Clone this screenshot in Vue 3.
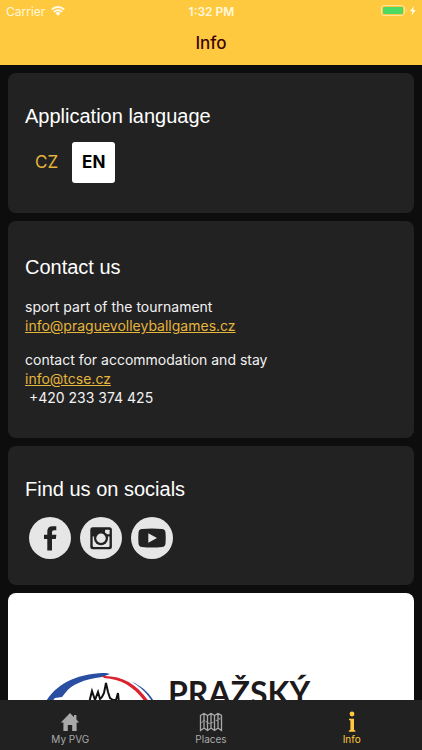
<script setup>
import { ref } from 'vue'

const language = ref('EN')
const languages = ['CZ', 'EN']
const activeTab = ref('Info')
const tabs = ['My PVG', 'Places', 'Info']
</script>

<template>
  <div class="app">
    <header class="header">
      <div class="status">
        <div class="carrier">
          <span>Carrier</span>
          <svg class="wifi" viewBox="0 0 14 10" aria-hidden="true">
            <path d="M0.8 3.6 A8.9 8.9 0 0 1 13.2 3.6" />
            <path d="M2.9 5.9 A5.9 5.9 0 0 1 11.1 5.9" />
            <path class="solid" d="M4.5 7.3 A3.6 3.6 0 0 1 9.5 7.3 L7 9.9 Z" />
          </svg>
        </div>
        <div class="clock">1:32 PM</div>
        <div class="power">
          <svg class="battery" viewBox="0 0 36 12" aria-hidden="true">
            <rect class="shell" x="0.5" y="0.5" width="23" height="10" rx="2.5" />
            <rect class="charge" x="2" y="2" width="20" height="7" rx="1" />
            <path class="nub" d="M25 4 Q26.5 5.5 25 7.5 Z" />
            <path class="bolt" d="M33 1 L29 6.3 H31.4 L30.6 10.5 L34.7 5 H32.2 Z" />
          </svg>
        </div>
      </div>
      <h1 class="title">Info</h1>
    </header>

    <main class="content">
      <section class="card">
        <h2>Application language</h2>
        <div class="languages">
          <button
            v-for="code in languages"
            :key="code"
            type="button"
            class="language"
            :class="{ active: language === code }"
            @click="language = code"
          >{{ code }}</button>
        </div>
      </section>

      <section class="card contact">
        <h2>Contact us</h2>
        <p>
          sport part of the tournament<br />
          <a href="mailto:info@praguevolleyballgames.cz">info@praguevolleyballgames.cz</a>
        </p>
        <p>
          contact for accommodation and stay<br />
          <a href="mailto:info@tcse.cz">info@tcse.cz</a><br />
          &nbsp;+420 233 374 425
        </p>
      </section>

      <section class="card socials-card">
        <h2>Find us on socials</h2>
        <div class="socials">
          <a href="#facebook" aria-label="Facebook">
            <svg viewBox="0 0 42 42">
              <circle cx="21" cy="21" r="21" />
              <path class="ink" d="M18.3 33.5 V22 H15 V17.7 H18.3 V14.6 Q18.3 9.3 23.6 9.3 H27.3 V13.3 H25 Q23 13.3 23 15.3 V17.7 H27.4 L26.8 22 H23 V33.5 Z" />
            </svg>
          </a>
          <a href="#instagram" aria-label="Instagram">
            <svg viewBox="0 0 42 42">
              <circle cx="21" cy="21" r="21" />
              <rect class="ink" x="10.3" y="10.3" width="21.6" height="22" rx="2.5" />
              <rect x="25" y="12.7" width="4.6" height="4.6" rx="0.6" />
              <path d="M12.7 19.5 H29.5 V28.8 Q29.5 30 28.3 30 H13.9 Q12.7 30 12.7 28.8 Z" />
              <circle class="ink" cx="21" cy="21.2" r="7" />
              <circle cx="21" cy="21.2" r="4.7" />
            </svg>
          </a>
          <a href="#youtube" aria-label="YouTube">
            <svg viewBox="0 0 42 42">
              <circle cx="21" cy="21" r="21" />
              <path class="ink" d="M11 12 Q21 11 31 12 Q34.2 12.3 34.5 15.5 Q35 21 34.5 26.5 Q34.2 29.8 31 30 Q21 31 11 30 Q7.8 29.8 7.5 26.5 Q7 21 7.5 15.5 Q7.8 12.3 11 12 Z" />
              <path d="M17.3 16.3 L26 21 L17.3 25.7 Z" />
            </svg>
          </a>
        </div>
      </section>

      <section class="card partner">
        <svg class="emblem" viewBox="0 0 120 90" aria-hidden="true">
          <path class="blue" d="M0 42 C8 14 34 0 66 0 L70 1 L62 4 C44 6 31 12 26 19 L22 24 L15 25 C11 29 8 36 6 46 Z" />
          <path class="red" d="M62 3 C84 2 100 13 113 35 L109 35 C98 17 84 6 64 5 Z" />
          <path class="blue" d="M92 9 C102 13 111 21 117 34 L114 32 C109 22 101 14 92 9 Z" />
          <path class="skyline" d="M48 40 L50 26 L52 18 L55 27 L58 19 L60 26 L62 24 L64 20 L66 10 L68 19 L70 25 L73 27 L76 27 L78 20 L80 40" />
        </svg>
        <div class="partner-name">PRAŽSKÝ</div>
      </section>
    </main>

    <nav class="tabs">
      <button
        v-for="tab in tabs"
        :key="tab"
        type="button"
        class="tab"
        :class="{ active: activeTab === tab }"
        @click="activeTab = tab"
      >
        <svg v-if="tab === 'My PVG'" viewBox="0 0 24 20" aria-hidden="true">
          <path class="fill" d="M12 1 L21.2 10.4 H18.6 V19 H14.2 V13 H9.8 V19 H5.4 V10.4 H2.8 Z" />
          <path class="fill" d="M16 3 H18.4 V9 L16 6.5 Z" />
        </svg>
        <svg v-else-if="tab === 'Places'" viewBox="0 0 24 20" aria-hidden="true">
          <path class="line" d="M1.5 3.5 L5 1.5 L8.5 3.5 L12 1.5 L15.5 3.5 L19 1.5 L22.5 3.5 V18.5 L19 16 L15.5 18.5 L12 16 L8.5 18.5 L5 16 L1.5 18.5 Z M5 1.5 V16 M8.5 3.5 V18.5 M12 1.5 V16 M15.5 3.5 V18.5 M19 1.5 V16" />
          <path class="route" d="M2.5 11 L4.5 8 L7 9.5 L10 11.5 L14 10.5 L17 8 L18.5 9 M19.5 6 L21.5 8 M21.5 6 L19.5 8" />
        </svg>
        <svg v-else viewBox="0 0 24 20" aria-hidden="true">
          <circle class="fill" cx="12" cy="2" r="2.4" />
          <path class="fill" d="M9 6.8 H14 V18 L15.4 18.5 V19.7 H8.8 V18.5 L10.4 18 V8.4 L9 7.9 Z" />
        </svg>
        <span>{{ tab }}</span>
      </button>
    </nav>
  </div>
</template>

<style>
body {
  margin: 0;
  background: #0d0d0d;
}
</style>

<style scoped>
.app {
  display: flex;
  flex-direction: column;
  height: 100vh;
  background: #0d0d0d;
  color: #fff;
  font-family: Inter, "Liberation Sans", sans-serif;
}

.header {
  flex: none;
  background: #ffc93f;
  padding-bottom: 11px;
}

.status {
  display: grid;
  grid-template-columns: 1fr auto 1fr;
  align-items: center;
  height: 22px;
  padding: 0 5px 0 6px;
  font-size: 12px;
  color: #fff8dc;
}

.carrier {
  display: flex;
  align-items: center;
  gap: 6px;
}

.wifi {
  width: 14px;
  height: 10px;
  fill: none;
  stroke: #fffbea;
  stroke-width: 2;
}

.wifi .solid {
  fill: #fffbea;
  stroke: none;
}

.clock {
  font-weight: 600;
}

.power {
  display: flex;
  justify-content: flex-end;
}

.battery {
  width: 36px;
  height: 12px;
}

.shell {
  fill: none;
  stroke: #ffe59c;
}

.charge {
  fill: #4cd964;
}

.nub {
  fill: #ffe59c;
}

.bolt {
  fill: #fffbea;
}

.title {
  margin: 0;
  padding-top: 10px;
  color: #3a0508;
  font-size: 17px;
  font-weight: 500;
  line-height: 22px;
  text-align: center;
}

.content {
  flex: 1;
  min-height: 0;
  display: flex;
  flex-direction: column;
  gap: 8px;
  padding: 8px 8px 0;
  overflow-y: auto;
  scrollbar-width: none;
}

.card {
  flex: none;
  padding: 31px 17px 30px;
  border-radius: 8px;
  background: #222;
}

h2 {
  margin: 0;
  font-family: "Liberation Sans", Arial, sans-serif;
  font-size: 20px;
  font-weight: 400;
  line-height: 24px;
}

.languages {
  display: flex;
  padding-top: 14px;
}

.language {
  padding: 0 10px;
  border: 0;
  border-radius: 3px;
  background: none;
  color: #e5b53c;
  font-family: inherit;
  font-size: 17px;
  line-height: 41px;
}

.language.active {
  margin-left: 4px;
  background: #fff;
  color: #000;
  font-weight: 700;
}

.contact {
  padding-top: 34px;
  padding-bottom: 31px;
}

p {
  margin: 0;
  padding-top: 15px;
  font-size: 14px;
  line-height: 19px;
  color: #f2f2f2;
}

.contact h2 + p {
  padding-top: 18px;
}

p a {
  color: #e5b53c;
}

.socials-card {
  padding-bottom: 26px;
}

.socials {
  display: flex;
  gap: 9px;
  padding: 16px 4px 0;
}

.socials a {
  width: 42px;
  height: 42px;
}

.socials svg {
  display: block;
  width: 42px;
  height: 42px;
  fill: #e6e6e6;
}

.socials .ink {
  fill: #222;
}

.partner {
  display: flex;
  align-items: flex-start;
  gap: 8px;
  padding: 80px 32px 40px;
  background: #fff;
}

.emblem {
  flex: none;
  width: 120px;
  height: 90px;
}

.blue {
  fill: #2a4fa2;
}

.red {
  fill: #d9232e;
}

.skyline {
  fill: none;
  stroke: #111;
  stroke-width: 2;
}

.partner-name {
  color: #1d1a1b;
  font-family: Lato, sans-serif;
  font-size: 32px;
  font-weight: 700;
  line-height: 40px;
}

.tabs {
  flex: none;
  display: grid;
  grid-template-columns: repeat(3, 1fr);
  height: 50px;
  background: #212121;
}

.tab {
  display: flex;
  flex-direction: column;
  align-items: center;
  padding: 12px 0 0;
  border: 0;
  background: none;
  color: #a9a9a9;
  font-family: inherit;
  font-size: 10px;
  line-height: 14px;
}

.tab.active {
  color: #ffc93f;
}

.tab svg {
  width: 24px;
  height: 20px;
  overflow: visible;
}

.fill {
  fill: currentColor;
}

.line,
.route {
  fill: none;
  stroke: currentColor;
  stroke-width: 1;
}

.line {
  stroke-width: 1.3;
}

.route {
  stroke-dasharray: 2 1;
}
</style>
